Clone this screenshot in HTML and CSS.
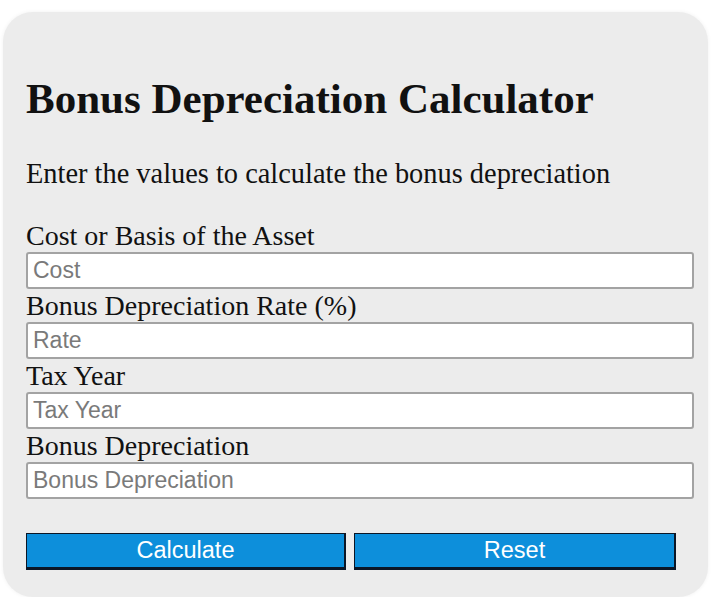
FILE: index.html
```html
<!DOCTYPE html>
<html lang="en">

<head>
    <meta charset="UTF-8">
    <meta name="viewport" content="width=device-width, initial-scale=1.0">
    <title>Bonus Depreciation Calculator</title>
    <link rel="stylesheet" href="styles.css">
</head>

<body>
    <div class="calculator">
        <h1>Bonus Depreciation Calculator</h1>
        <p class="intro">Enter the values to calculate the bonus depreciation</p>

        <div class="field">
            <label for="cost">Cost or Basis of the Asset</label>
            <input type="text" id="cost" placeholder="Cost">
        </div>
        <div class="field">
            <label for="rate">Bonus Depreciation Rate (%)</label>
            <input type="text" id="rate" placeholder="Rate">
        </div>
        <div class="field">
            <label for="taxYear">Tax Year</label>
            <input type="text" id="taxYear" placeholder="Tax Year">
        </div>
        <div class="field">
            <label for="bonus">Bonus Depreciation</label>
            <input type="text" id="bonus" placeholder="Bonus Depreciation">
        </div>

        <div class="buttons">
            <button class="btn btn-calc" id="calcBtn">Calculate</button>
            <button class="btn btn-reset" id="resetBtn">Reset</button>
        </div>
    </div>

    <script>
        document.getElementById('calcBtn').addEventListener('click', function () {
            const cost = parseFloat(document.getElementById('cost').value);
            const rate = parseFloat(document.getElementById('rate').value);
            if (!isNaN(cost) && !isNaN(rate)) {
                document.getElementById('bonus').value = (cost * rate / 100).toFixed(2);
            }
        });

        document.getElementById('resetBtn').addEventListener('click', function () {
            ['cost', 'rate', 'taxYear', 'bonus'].forEach(id => {
                document.getElementById(id).value = '';
            });
        });
    </script>
</body>

</html>
```

FILE: styles.css
```css
body {
    margin: 0;
    background: #fff;
    font-family: "Liberation Serif", "Times New Roman", serif;
    color: #111;
}

.calculator {
    margin: 12px 0 0 3px;
    width: 705px;
    height: 585px;
    box-sizing: border-box;
    padding: 20px 14px 0 23px;
    background: #ececec;
    border-radius: 30px;
    box-shadow: 0 0 4px rgba(0, 0, 0, 0.06);
}

h1 {
    margin: 43px 0 34px;
    font-size: 43px;
    font-weight: bold;
    line-height: 48px;
}

.intro {
    margin: 0 0 29px;
    font-size: 28.4px;
    line-height: 33px;
}

.field label {
    display: block;
    font-size: 28px;
    line-height: 33px;
}

.field input {
    display: block;
    width: 668px;
    height: 37px;
    box-sizing: border-box;
    margin: 0;
    padding: 0 5px;
    border: 2px solid #a3a3a3;
    border-radius: 3px;
    background: #fff;
    font-family: "Liberation Sans", Arial, sans-serif;
    font-size: 23px;
    color: #222;
}

.field input::placeholder {
    color: #7a7a7a;
}

.buttons {
    display: flex;
    gap: 8px;
    margin-top: 34px;
}

.btn {
    height: 37px;
    padding: 0;
    background: #0d8fdb;
    color: #fff;
    border: 1px solid #0b1626;
    border-right-width: 2px;
    border-bottom-width: 3px;
    font-family: "Liberation Sans", Arial, sans-serif;
    font-size: 23.5px;
    cursor: pointer;
}

.btn-calc {
    width: 320px;
}

.btn-reset {
    width: 322px;
}
```
